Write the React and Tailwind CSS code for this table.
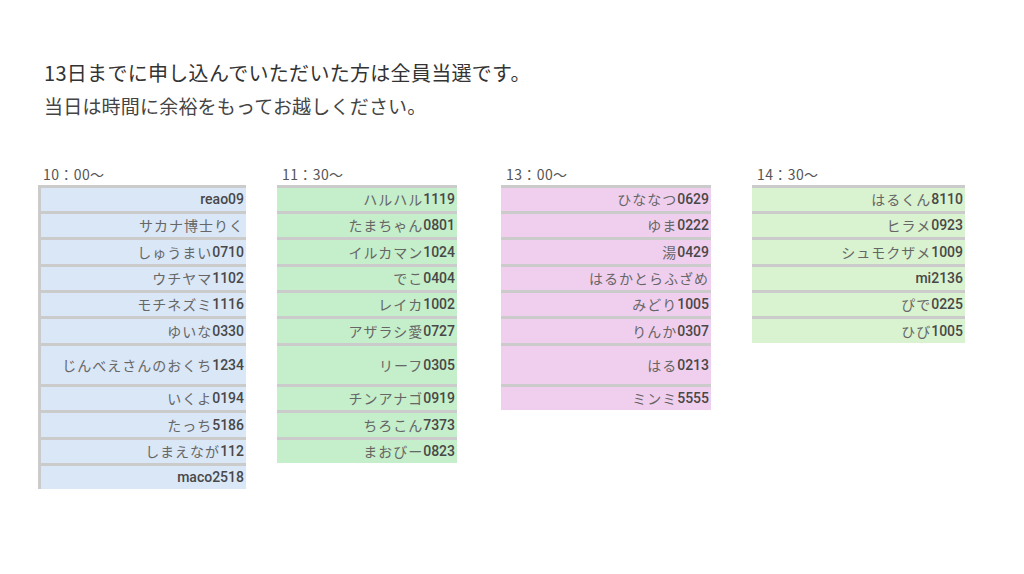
import React from "react";

const columns = [
  {
    time: "10：00～",
    width: "w-[208px]",
    gap: "ml-0",
    bg: "bg-[#dae7f7]",
    leftBorder: true,
    names: [
      "reao09",
      "サカナ博士りく",
      "しゅうまい0710",
      "ウチヤマ1102",
      "モチネズミ1116",
      "ゆいな0330",
      "じんべえさんのおくち1234",
      "いくよ0194",
      "たっち5186",
      "しまえなが112",
      "maco2518",
    ],
    tall: 6,
  },
  {
    time: "11：30～",
    width: "w-[180px]",
    gap: "ml-[31px]",
    bg: "bg-[#c5eecb]",
    names: [
      "ハルハル1119",
      "たまちゃん0801",
      "イルカマン1024",
      "でこ0404",
      "レイカ1002",
      "アザラシ愛0727",
      "リーフ0305",
      "チンアナゴ0919",
      "ちろこん7373",
      "まおびー0823",
    ],
    tall: 6,
  },
  {
    time: "13：00～",
    width: "w-[210px]",
    gap: "ml-[44px]",
    bg: "bg-[#f0cfee]",
    names: [
      "ひななつ0629",
      "ゆま0222",
      "湯0429",
      "はるかとらふざめ",
      "みどり1005",
      "りんか0307",
      "はる0213",
      "ミンミ5555",
    ],
    tall: 6,
  },
  {
    time: "14：30～",
    width: "w-[213px]",
    gap: "ml-[41px]",
    bg: "bg-[#d9f2d0]",
    names: [
      "はるくん8110",
      "ヒラメ0923",
      "シュモクザメ1009",
      "mi2136",
      "ぴで0225",
      "ひび1005",
    ],
    tall: -1,
  },
];

// latin part in Roboto medium, kana in the CJK face
const Name = ({ text }) => {
  const parts = text.match(/[A-Za-z0-9]+|[^A-Za-z0-9]+/g) || [];
  return (
    <>
      {parts.map((p, i) =>
        /[A-Za-z0-9]/.test(p) ? (
          <span
            key={i}
            className="font-['Roboto',sans-serif] font-medium text-[14px] text-[#484848]"
          >
            {p}
          </span>
        ) : (
          <span
            key={i}
            className="font-['Noto_Sans_CJK_JP',sans-serif] text-[14px] text-[#666] tracking-[1px]"
          >
            {p}
          </span>
        )
      )}
    </>
  );
};

const Column = ({ col }) => (
  <div className={`${col.width} ${col.gap} shrink-0`}>
    <div className="pl-[5px] h-[22px] pt-[2px] text-[14px] leading-[18px] text-[#555] tracking-[0.4px] font-['Noto_Sans_CJK_JP',sans-serif]">
      {col.time}
    </div>
    <div
      className={`${col.bg} ${
        col.leftBorder ? "border-l-[3px] border-[#cbcbcb]" : ""
      }`}
    >
      {col.names.map((n, i) => (
        <div
          key={n}
          className={`border-t-[3px] border-[#cbcbcb] flex items-center justify-end pr-[2px] whitespace-nowrap ${
            i === col.tall ? "h-[41px]" : i % 3 === 2 ? "h-[27px]" : "h-[26px]"
          }`}
        >
          <Name text={n} />
        </div>
      ))}
    </div>
  </div>
);

export default function App() {
  return (
    <div className="w-[1024px] h-[574px] bg-white overflow-hidden font-['Noto_Sans_CJK_JP',sans-serif]">
      <div className="pt-[58px] pl-[44px]">
        <h1 className="text-[20px] leading-[30px] text-[#333] font-normal tracking-[0.3px]">
          13日までに申し込んでいただいた方は全員当選です。
        </h1>
        <p className="text-[19px] leading-[30px] text-[#444] mt-[3px] tracking-[0.2px]">
          当日は時間に余裕をもってお越しください。
        </p>
      </div>
      <div className="flex items-start pl-[38px] mt-[42px]">
        {columns.map((c) => (
          <Column key={c.time} col={c} />
        ))}
      </div>
    </div>
  );
}
